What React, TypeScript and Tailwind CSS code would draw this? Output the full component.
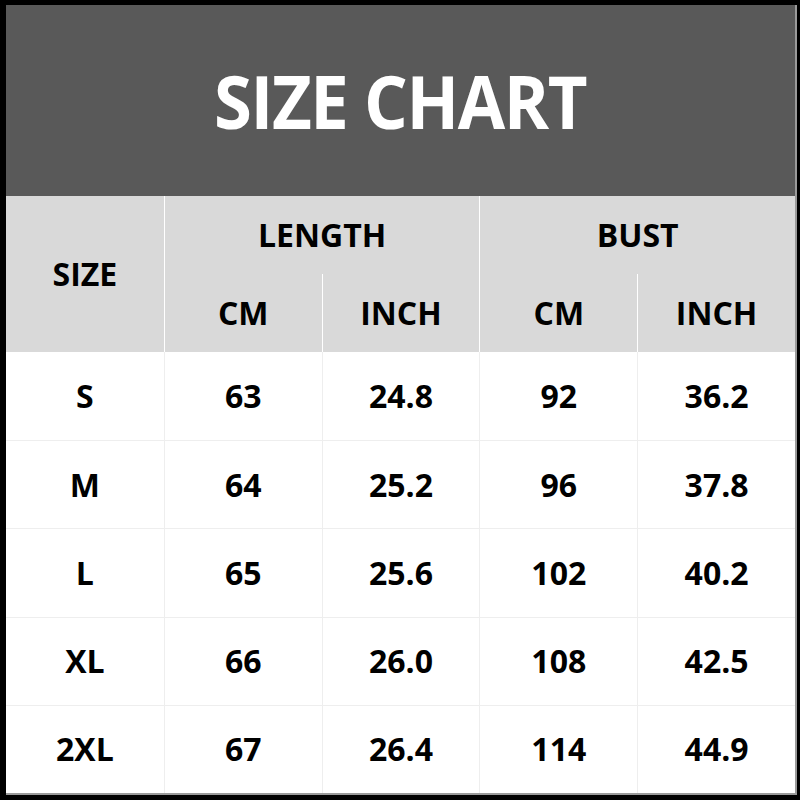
const rows = [
  { size: 'S', lenCm: '63', lenIn: '24.8', bustCm: '92', bustIn: '36.2' },
  { size: 'M', lenCm: '64', lenIn: '25.2', bustCm: '96', bustIn: '37.8' },
  { size: 'L', lenCm: '65', lenIn: '25.6', bustCm: '102', bustIn: '40.2' },
  { size: 'XL', lenCm: '66', lenIn: '26.0', bustCm: '108', bustIn: '42.5' },
  { size: '2XL', lenCm: '67', lenIn: '26.4', bustCm: '114', bustIn: '44.9' },
];

const font = { fontFamily: '"Open Sans", "Noto Sans", sans-serif' };

export default function App() {
  return (
    <div className="h-[800px] w-[800px] bg-black pl-[6px] pt-[5px]" style={font}>
      <div className="flex h-[790px] w-[791px] flex-col border-b-2 border-r-2 border-[#9a9a9a] bg-white">
        <div className="flex h-[191px] items-center justify-center bg-[#595959]">
          <h1 className="scale-x-[0.93] text-[74px] font-bold leading-none tracking-[-1.5px] text-white">
            SIZE CHART
          </h1>
        </div>

        <div className="grid grid-cols-5 grid-rows-[78px_78px] bg-[#d9d9d9] text-[32px] font-bold text-black">
          <div className="row-span-2 flex items-center justify-center">SIZE</div>
          <div className="col-span-2 flex items-center justify-center border-l border-white">LENGTH</div>
          <div className="col-span-2 flex items-center justify-center border-l border-white">BUST</div>
          <div className="flex items-center justify-center border-l border-white">CM</div>
          <div className="flex items-center justify-center border-l border-white">INCH</div>
          <div className="flex items-center justify-center border-l border-white">CM</div>
          <div className="flex items-center justify-center border-l border-white">INCH</div>
        </div>

        <div className="grid flex-1 grid-cols-5 grid-rows-5 text-[32px] font-bold text-black">
          {rows.map((r, i) => {
            const cells = [r.size, r.lenCm, r.lenIn, r.bustCm, r.bustIn];
            return cells.map((c, j) => (
              <div
                key={`${i}-${j}`}
                className={`flex items-center justify-center border-[#eeeeee] ${j > 0 ? 'border-l' : ''} ${
                  i > 0 ? 'border-t' : ''
                }`}
              >
                {c}
              </div>
            ));
          })}
        </div>
      </div>
    </div>
  );
}
